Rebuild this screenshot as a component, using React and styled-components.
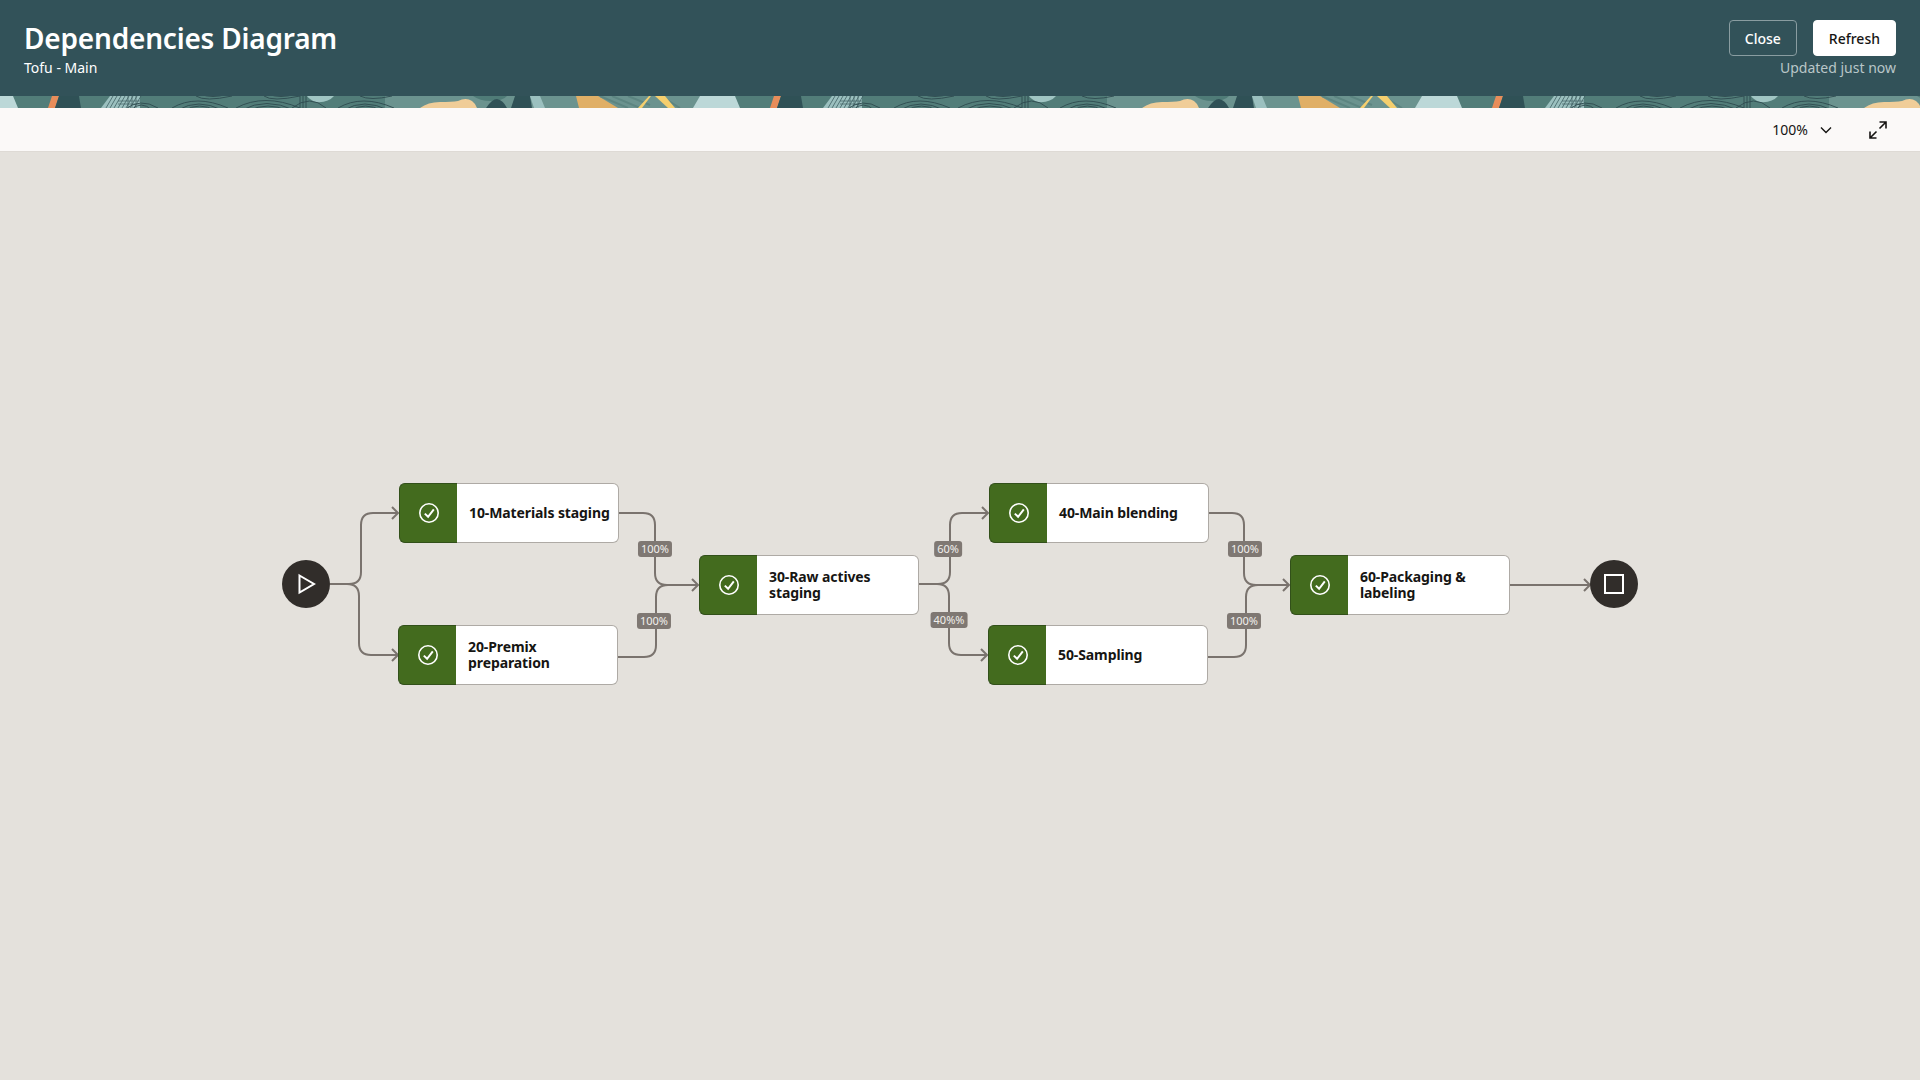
import styled, { createGlobalStyle } from "styled-components";

const GlobalStyle = createGlobalStyle`
  html, body {
    margin: 0;
    height: 100%;
    overflow: hidden;
  }
  body {
    font-family: "Noto Sans", "Open Sans", sans-serif;
    background: #e4e1dc;
  }
`;

const Page = styled.div`
  display: flex;
  flex-direction: column;
  height: 100vh;
`;

const Header = styled.header`
  display: flex;
  justify-content: space-between;
  height: 96px;
  box-sizing: border-box;
  padding: 20px 24px 0;
  background: #325259;
  color: #fff;
`;

const TitleBlock = styled.div`
  display: flex;
  flex-direction: column;
`;

const Title = styled.h1`
  margin: 0;
  font-size: 28px;
  line-height: 36px;
  font-weight: 600;
  letter-spacing: -0.2px;
`;

const Subtitle = styled.div`
  font-size: 14px;
  line-height: 24px;
`;

const Actions = styled.div`
  display: flex;
  flex-direction: column;
  align-items: flex-end;
`;

const ButtonRow = styled.div`
  display: flex;
  gap: 16px;
`;

const Button = styled.button`
  height: 36px;
  box-sizing: border-box;
  padding: 0 15px;
  border-radius: 4px;
  border: 1px solid ${(p) => (p.$solid ? "#fff" : "#8a9da1")};
  background: ${(p) => (p.$solid ? "#fff" : "transparent")};
  color: ${(p) => (p.$solid ? "#161513" : "#fff")};
  font: 500 14px "Noto Sans", sans-serif;
`;

const Updated = styled.div`
  font-size: 14px;
  line-height: 24px;
  color: #b9c6c8;
`;

const Banner = styled.svg`
  display: block;
  width: 100%;
  height: 12px;
  flex: none;
`;

const Toolbar = styled.div`
  display: flex;
  align-items: center;
  justify-content: flex-end;
  height: 44px;
  box-sizing: border-box;
  padding: 0 33px 0 0;
  background: #fbf9f8;
  border-bottom: 1px solid #dedad5;
  color: #161513;
  flex: none;
`;

const Zoom = styled.div`
  display: flex;
  align-items: center;
  gap: 12px;
  font-size: 14px;
  margin-right: 37px;
`;

const Canvas = styled.main`
  flex: 1;
  position: relative;
  background: #e4e1dc;
`;

const Edges = styled.svg`
  position: absolute;
  inset: 0;
  width: 100%;
  height: 100%;
`;

const Node = styled.div`
  position: absolute;
  left: ${(p) => p.$x}px;
  top: ${(p) => p.$y}px;
  display: flex;
  width: 220px;
  height: 60px;
  box-sizing: border-box;
  background: #fff;
  border: 1px solid #aeaaa5;
  border-left: none;
  border-radius: 6px;
`;

const NodeStatus = styled.div`
  display: flex;
  align-items: center;
  justify-content: center;
  width: 57px;
  margin: -1px 0;
  flex: none;
  background: #436b1e;
  border: 1px solid #32501a;
  border-right: none;
  border-radius: 6px 0 0 6px;
`;

const NodeLabel = styled.div`
  align-self: center;
  padding-left: 12px;
  width: 150px;
  font-size: 14px;
  line-height: 16px;
  font-weight: 700;
  letter-spacing: -0.1px;
  color: #161513;
`;

const Terminal = styled.div`
  position: absolute;
  left: ${(p) => p.$x}px;
  top: ${(p) => p.$y}px;
  display: flex;
  align-items: center;
  justify-content: center;
  width: 48px;
  height: 48px;
  border-radius: 50%;
  background: #312d2a;
`;

const EdgeLabel = styled.div`
  position: absolute;
  left: ${(p) => p.$x}px;
  top: ${(p) => p.$y}px;
  transform: translate(-50%, -50%);
  padding: 0 3px;
  height: 16px;
  line-height: 16px;
  border-radius: 3px;
  background: #7f7873;
  color: #f1efec;
  font-size: 11px;
`;

const CANVAS_TOP = 152;

const nodes = [
  { id: 10, x: 399, y: 483, label: "10-Materials staging" },
  { id: 20, x: 398, y: 625, label: "20-Premix preparation" },
  { id: 30, x: 699, y: 555, label: "30-Raw actives staging" },
  { id: 40, x: 989, y: 483, label: "40-Main blending" },
  { id: 50, x: 988, y: 625, label: "50-Sampling" },
  { id: 60, x: 1290, y: 555, label: "60-Packaging & labeling" },
];

const edges = [
  "M330 584H349Q361 584 361 572V525Q361 513 373 513H397",
  "M330 584H347Q359 584 359 596V643Q359 655 371 655H397",
  "M619 513H643Q655 513 655 525V573Q655 585 667 585H698",
  "M618 657H644Q656 657 656 645V597Q656 585 668 585H698",
  "M919 584H938Q950 584 950 572V525Q950 513 962 513H987",
  "M919 584H937Q949 584 949 596V643Q949 655 961 655H987",
  "M1209 513H1232Q1244 513 1244 525V573Q1244 585 1256 585H1289",
  "M1208 657H1234Q1246 657 1246 645V597Q1246 585 1258 585H1289",
  "M1509 585H1589",
];

const arrows = [
  [398, 513],
  [398, 655],
  [698, 585],
  [988, 513],
  [987, 655],
  [1289, 585],
  [1590, 585],
];

const edgeLabels = [
  { x: 655, y: 549, text: "100%" },
  { x: 654, y: 621, text: "100%" },
  { x: 948, y: 549, text: "60%" },
  { x: 949, y: 620, text: "40%%" },
  { x: 1245, y: 549, text: "100%" },
  { x: 1244, y: 621, text: "100%" },
];

const CheckIcon = () => (
  <svg width="22" height="22" viewBox="-11 -11 22 22" fill="none" stroke="#fff">
    <circle r="9.2" strokeWidth="1.6" />
    <path d="M-4.2 0.6L-0.9 3.8L4.8 -3.6" strokeWidth="2" />
  </svg>
);

const PlayIcon = () => (
  <svg width="22" height="22" viewBox="-11 -11 22 22" fill="none" stroke="#fff" strokeWidth="2">
    <path d="M-6.5 -8.5L8 0L-6.5 8.5Z" />
  </svg>
);

const StopIcon = () => (
  <svg width="22" height="22" viewBox="0 0 22 22" fill="none" stroke="#fff" strokeWidth="2">
    <rect x="2" y="2" width="18" height="18" />
  </svg>
);

const ChevronIcon = () => (
  <svg width="12" height="12" viewBox="0 0 12 12" fill="none" stroke="#161513" strokeWidth="1.4">
    <path d="M1 3.5L6 8.5L11 3.5" />
  </svg>
);

const ExpandIcon = () => (
  <svg width="18" height="18" viewBox="0 0 18 18" fill="none" stroke="#161513" strokeWidth="1.6">
    <path d="M10.5 1H17V7.5M17 1L10.5 7.5M1 10.5V17H7.5M1 17L7.5 10.5" />
  </svg>
);

const BannerPattern = () => (
  <Banner xmlns="http://www.w3.org/2000/svg" aria-hidden="true">
    <defs>
      <pattern id="tile" patternUnits="userSpaceOnUse" width="722" height="12">
        <rect width="722" height="12" fill="#527d79" />
        <rect x="385" width="337" height="12" fill="#6b938f" />
        <path d="M0 0H13L18 12H0Z" fill="#bcd8d8" />
        <path d="M52 0H59L55 12H48Z" fill="#e88d5a" />
        <path d="M59 0H79L81 12H55Z" fill="#2f5156" />
        <path d="M110 0H140V12H101Z" fill="#9bc0bf" />
        <path
          d="M106 12L113 0M110 12L117 0M114 12L121 0M118 12L125 0M122 12L129 0M126 12L133 0M130 12L137 0M134 12L141 0"
          stroke="#3f5f62"
          strokeWidth="0.8"
        />
        <path d="M128 0V12M132 0V12M136 0V12M118 5H140M118 8H140" stroke="#3f5f62" strokeWidth="0.7" />
        <path d="M307 0H334Q328 7 316 6Q310 4 307 0Z" fill="#a0c5c3" />
        <g fill="none" stroke="#2c4a4e" strokeWidth="0.9">
          <path d="M124 14Q140 1 158 12M131 14Q141 4 152 14" />
          <path d="M172 12Q196 -2 228 12M178 14Q198 2 222 14M184 15Q199 5 216 15" />
          <path d="M196 0Q205 6 232 0M200 -2Q212 3 228 -2" />
          <path d="M236 12Q264 -3 300 12M242 14Q266 1 294 14M248 15Q268 5 288 15" />
          <path d="M264 0Q272 6 300 0M268 -2Q280 3 296 -2" />
          <path d="M300 0V12M303 0V12M306 0V12" />
          <path d="M292 12Q310 -2 326 12" />
          <path d="M338 12Q362 -2 394 12M344 14Q364 2 388 14M350 15Q365 5 382 15" />
          <path d="M360 0Q370 5 392 0" />
        </g>
        <path d="M473 0H507Q503 5 490 5Q480 5 473 0Z" fill="#4f7b77" />
        <path d="M420 12Q428 6 440 6Q452 6 458 5Q466 1 472 5Q476 8 477 12Z" fill="#f0cd98" />
        <path d="M486 12Q492 3 497 3Q503 4 507 12Z" fill="#2f5156" />
        <path d="M515 0H530L532 12H511Z" fill="#2f5156" />
        <path d="M530 0H540L545 12H534Z" fill="#9bc0bf" />
        <path d="M576 0H598L618 12H579Z" fill="#e0af66" />
        <path
          d="M600 0L628 12M612 0L640 12M628 0L650 9M664 2L680 12"
          stroke="#5c8581"
          strokeWidth="2"
        />
        <path d="M638 12L649 0H651L642 12Z" fill="#f5cf6e" />
        <path d="M655 0H665L675 12H668Z" fill="#f5cf6e" />
        <path d="M700 0H722V12H693Z" fill="#bcd8d8" />
      </pattern>
    </defs>
    <rect width="100%" height="12" fill="url(#tile)" />
  </Banner>
);

const App = () => {
  return (
    <Page>
      <GlobalStyle />
      <Header>
        <TitleBlock>
          <Title>Dependencies Diagram</Title>
          <Subtitle>Tofu - Main</Subtitle>
        </TitleBlock>
        <Actions>
          <ButtonRow>
            <Button>Close</Button>
            <Button $solid>Refresh</Button>
          </ButtonRow>
          <Updated>Updated just now</Updated>
        </Actions>
      </Header>
      <BannerPattern />
      <Toolbar>
        <Zoom>
          100%
          <ChevronIcon />
        </Zoom>
        <ExpandIcon />
      </Toolbar>
      <Canvas>
        <Edges viewBox={`0 ${CANVAS_TOP} 1920 928`} fill="none">
          {edges.map((d) => (
            <path key={d} d={d} stroke="#7a736e" strokeWidth="2" />
          ))}
          {arrows.map(([x, y]) => (
            <path
              key={`${x}-${y}`}
              d={`M${x - 6} ${y - 6}L${x} ${y}L${x - 6} ${y + 6}`}
              stroke="#7a736e"
              strokeWidth="2"
            />
          ))}
        </Edges>
        <Terminal $x={282} $y={560 - CANVAS_TOP}>
          <PlayIcon />
        </Terminal>
        {nodes.map((n) => (
          <Node key={n.id} $x={n.x} $y={n.y - CANVAS_TOP}>
            <NodeStatus>
              <CheckIcon />
            </NodeStatus>
            <NodeLabel>{n.label}</NodeLabel>
          </Node>
        ))}
        {edgeLabels.map((l) => (
          <EdgeLabel key={`${l.x}-${l.y}`} $x={l.x} $y={l.y - CANVAS_TOP}>
            {l.text}
          </EdgeLabel>
        ))}
        <Terminal $x={1590} $y={560 - CANVAS_TOP}>
          <StopIcon />
        </Terminal>
      </Canvas>
    </Page>
  );
};

export default App;
